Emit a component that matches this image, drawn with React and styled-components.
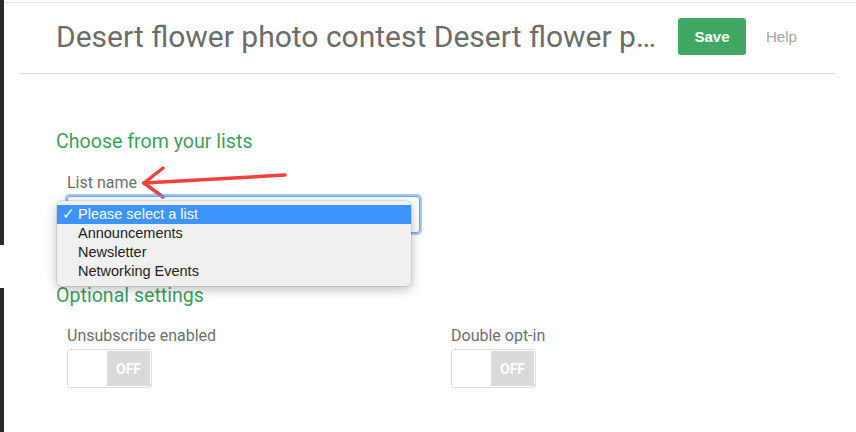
import React from "react";
import styled, { createGlobalStyle } from "styled-components";

const GlobalStyle = createGlobalStyle`
  body {
    margin: 0;
    background: #ffffff;
    font-family: Roboto, "Liberation Sans", sans-serif;
    overflow: hidden;
  }
`;

const Frame = styled.div`
  display: flex;
  width: 856px;
  height: 432px;
`;

const Edge = styled.div`
  width: 4px;
  display: flex;
  flex-direction: column;
  gap: 43px;
`;

const EdgeBlock = styled.div`
  height: ${(p) => p.$h}px;
  background: #2a2a2a;
`;

const Main = styled.div`
  flex: 1;
  margin-top: 2px;
  border-top: 1px solid #e6e6e6;
  padding: 0 21px 0 15px;
`;

const Header = styled.header`
  height: 66px;
  display: flex;
  align-items: center;
  padding: 0 0 4px 37px;
  border-bottom: 1px solid #dddddd;
`;

const Title = styled.h1`
  margin: 0;
  width: 606px;
  font-size: 30px;
  font-weight: 400;
  color: #6c6c6c;
  white-space: nowrap;
  overflow: hidden;
  text-overflow: ellipsis;
`;

const SaveButton = styled.button`
  margin-left: 16px;
  width: 68px;
  height: 37px;
  flex-shrink: 0;
  border: none;
  border-radius: 3px;
  background: #41a863;
  color: #ffffff;
  font-family: "Liberation Sans", Arial, sans-serif;
  font-weight: 700;
  font-size: 15px;
`;

const HelpLink = styled.span`
  margin-left: 20px;
  font-family: "Liberation Sans", Arial, sans-serif;
  font-size: 15px;
  color: #a3a3a3;
`;

const Content = styled.div`
  padding: 56px 0 0 37px;
`;

const SectionTitle = styled.h2`
  margin: ${(p) => p.$top}px 0 ${(p) => p.$gap}px;
  font-size: 19.6px;
  font-weight: 400;
  line-height: 24px;
  color: #3f9e5f;
`;

const Field = styled.div`
  position: relative;
  padding-left: 11px;
`;

const Label = styled.div`
  font-size: 16px;
  line-height: 19px;
  color: #6e6e6e;
  margin-bottom: 4px;
`;

const SelectBox = styled.div`
  position: relative;
  width: 351px;
  height: 35px;
  border: 1px solid #6aa6ee;
  border-radius: 3px;
  box-shadow: 0 0 0 2px rgba(88, 156, 240, 0.55);
`;

const Menu = styled.ul`
  position: absolute;
  left: -11px;
  top: 4px;
  width: 354px;
  margin: 0;
  padding: 4px 0 5px;
  list-style: none;
  background: #f0f0f0;
  border-radius: 5px;
  box-shadow: 0 3px 12px rgba(0, 0, 0, 0.28), 0 0 0 1px rgba(0, 0, 0, 0.08);
  font-family: "Liberation Sans", Arial, sans-serif;
  font-size: 14.5px;
  z-index: 2;
`;

const MenuItem = styled.li`
  position: relative;
  height: 19px;
  line-height: 19px;
  padding-left: 21px;
  color: ${(p) => (p.$active ? "#ffffff" : "#222222")};
  background: ${(p) => (p.$active ? "#3d94fd" : "transparent")};
`;

const Check = styled.span`
  position: absolute;
  left: 5px;
  top: 0;
`;

const Arrow = styled.svg`
  position: absolute;
  left: 0;
  top: 0;
  overflow: visible;
  pointer-events: none;
`;

const ToggleGrid = styled.div`
  display: grid;
  grid-template-columns: 384px 200px;
  padding-left: 11px;
`;

const Toggle = styled.div`
  width: 81px;
  height: 35px;
  padding: 1px;
  display: flex;
  justify-content: flex-end;
  border: 1px solid #dddddd;
  border-radius: 3px;
`;

const ToggleKnob = styled.div`
  width: 43px;
  display: flex;
  align-items: center;
  justify-content: center;
  background: #d9d9d9;
  color: #ffffff;
  font-size: 14px;
  font-weight: 700;
`;

const lists = ["Please select a list", "Announcements", "Newsletter", "Networking Events"];

export default function App() {
  return (
    <Frame>
      <GlobalStyle />
      <Edge>
        <EdgeBlock $h={245} />
        <EdgeBlock $h={144} />
      </Edge>
      <Main>
        <Header>
          <Title>Desert flower photo contest Desert flower photo contest</Title>
          <SaveButton>Save</SaveButton>
          <HelpLink>Help</HelpLink>
        </Header>
        <Content>
          <SectionTitle $top={0} $gap={19}>Choose from your lists</SectionTitle>
          <Field>
            <Label>List name</Label>
            <Arrow width="240" height="32" viewBox="0 0 240 32">
              <g stroke="#f2403a" strokeWidth="3.5" strokeLinecap="round" fill="none">
                <line x1="88" y1="10" x2="229" y2="2" />
                <line x1="88" y1="10" x2="107" y2="-5" />
                <line x1="88" y1="10" x2="107" y2="24" />
              </g>
            </Arrow>
            <SelectBox>
              <Menu>
                {lists.map((name, i) => (
                  <MenuItem key={name} $active={i === 0}>
                    {i === 0 && <Check>✓</Check>}
                    {name}
                  </MenuItem>
                ))}
              </Menu>
            </SelectBox>
          </Field>
          <SectionTitle $top={51} $gap={18}>Optional settings</SectionTitle>
          <ToggleGrid>
            <div>
              <Label>Unsubscribe enabled</Label>
              <Toggle><ToggleKnob>OFF</ToggleKnob></Toggle>
            </div>
            <div>
              <Label>Double opt-in</Label>
              <Toggle><ToggleKnob>OFF</ToggleKnob></Toggle>
            </div>
          </ToggleGrid>
        </Content>
      </Main>
    </Frame>
  );
}
